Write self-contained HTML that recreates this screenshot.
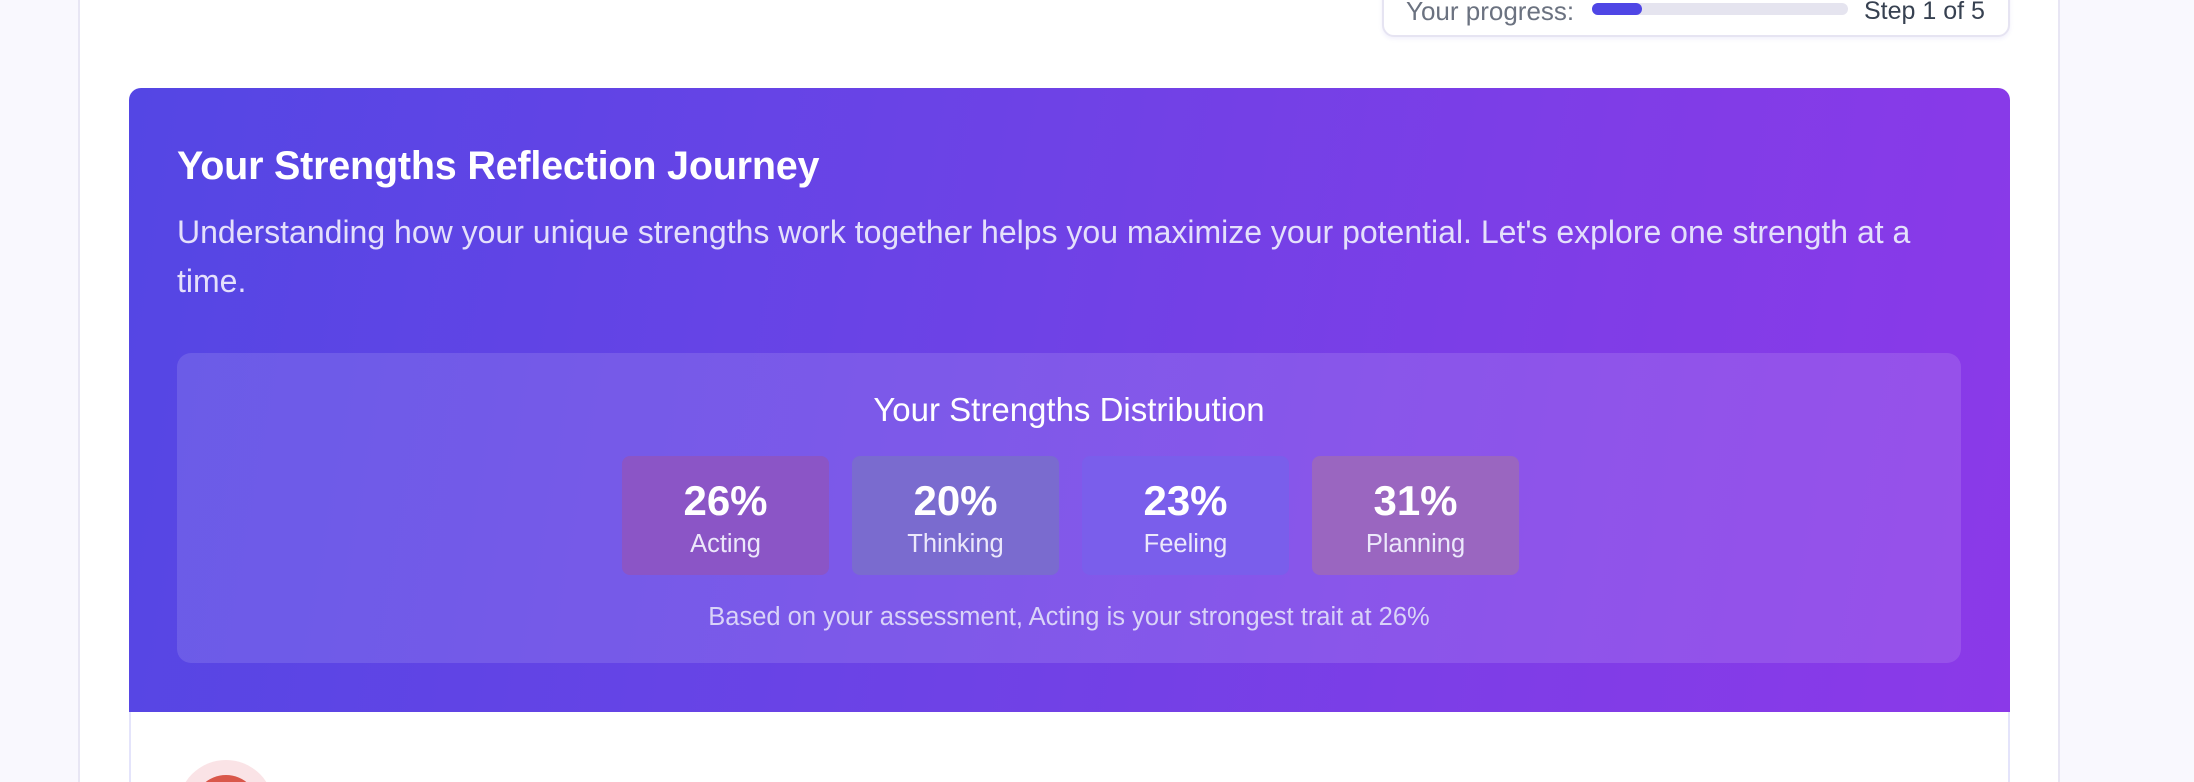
<!DOCTYPE html>
<html><head><meta charset="utf-8"><style>
*{margin:0;padding:0;box-sizing:border-box}
html,body{width:2194px;height:782px;overflow:hidden}
body{background:#f9f8fe;font-family:"Liberation Sans",sans-serif;position:relative}
.root{position:absolute;left:0;top:0;width:2194px;height:782px;overflow:hidden}
.wrap{position:absolute;left:78px;top:0;width:1982px;height:782px;background:#fff;border-left:2px solid #e8e6f4;border-right:2px solid #e8e6f4}
.prog{position:absolute;left:1382px;top:-20px;width:628px;height:57px;background:#fff;border:2px solid #e6e4f2;border-radius:12px;box-shadow:0 2px 4px rgba(80,70,200,0.08)}
.prog .l{position:absolute;left:22px;top:18px;font-size:26px;color:#6b7280;line-height:22px}
.prog .bar{position:absolute;left:208px;top:21px;width:256px;height:12px;border-radius:6px;background:#e5e4ef}
.prog .bar i{position:absolute;left:0;top:0;width:50px;height:12px;border-radius:6px;background:#4f46e5}
.prog .r{position:absolute;left:480px;top:18px;font-size:25px;color:#374151;line-height:22px}
.card{position:absolute;left:129px;top:88px;width:1881px;height:624px;border-radius:12px 12px 0 0;background:linear-gradient(100deg,#5446e4 0%,#6a43e6 40%,#7f3de7 75%,#8b39e8 100%)}
h1{position:absolute;left:48px;top:56px;font-size:39.5px;font-weight:bold;color:#fff;letter-spacing:-0.2px}
.p{position:absolute;left:48px;top:120px;width:1790px;font-size:32px;line-height:49px;color:#e4e0fb}
.inner{position:absolute;left:48px;top:265px;width:1784px;height:310px;border-radius:14px;background:rgba(255,255,255,0.12)}
.dt{position:absolute;left:0;width:100%;top:38px;text-align:center;font-size:33px;color:#fff}
.box{position:absolute;top:103px;width:207px;height:119px;border-radius:8px;text-align:center;color:#fff}
.box b{display:block;font-size:42px;margin-top:23px;line-height:44px}
.box span{display:block;font-size:25.5px;margin-top:7px;color:#ece8fb}
.fn{position:absolute;left:0;width:100%;top:250px;text-align:center;font-size:25.5px;color:#d9d3f8}
.below{position:absolute;left:129px;top:712px;width:1881px;height:70px;background:#fff;border-left:2px solid #e4e4fb;border-right:2px solid #e4e4fb}
.avc{position:absolute;left:178px;top:760px;width:96px;height:22px;overflow:hidden}
.av{position:absolute;left:0;top:0;width:96px;height:96px;border-radius:50%;background:#fae3e6}
.av i{position:absolute;left:15px;top:15px;width:66px;height:66px;border-radius:50%;background:#d9574a}
</style></head><body><div class="root">
<div class="wrap"></div>
<div class="prog"><div class="l">Your progress:</div><div class="bar"><i></i></div><div class="r">Step 1 of 5</div></div>
<div class="card">
<h1>Your Strengths Reflection Journey</h1>
<div class="p">Understanding how your unique strengths work together helps you maximize your potential. Let's explore one strength at a time.</div>
<div class="inner">
<div class="dt">Your Strengths Distribution</div>
<div class="box" style="left:445px;background:#8b55c6"><b>26%</b><span>Acting</span></div>
<div class="box" style="left:675px;background:#7a6bcf"><b>20%</b><span>Thinking</span></div>
<div class="box" style="left:905px;background:#7a5eeb"><b>23%</b><span>Feeling</span></div>
<div class="box" style="left:1135px;background:#9a66c0"><b>31%</b><span>Planning</span></div>
<div class="fn">Based on your assessment, Acting is your strongest trait at 26%</div>
</div>
</div>
<div class="below"></div>
<div class="avc"><div class="av"><i></i></div></div>
</div></body></html>
